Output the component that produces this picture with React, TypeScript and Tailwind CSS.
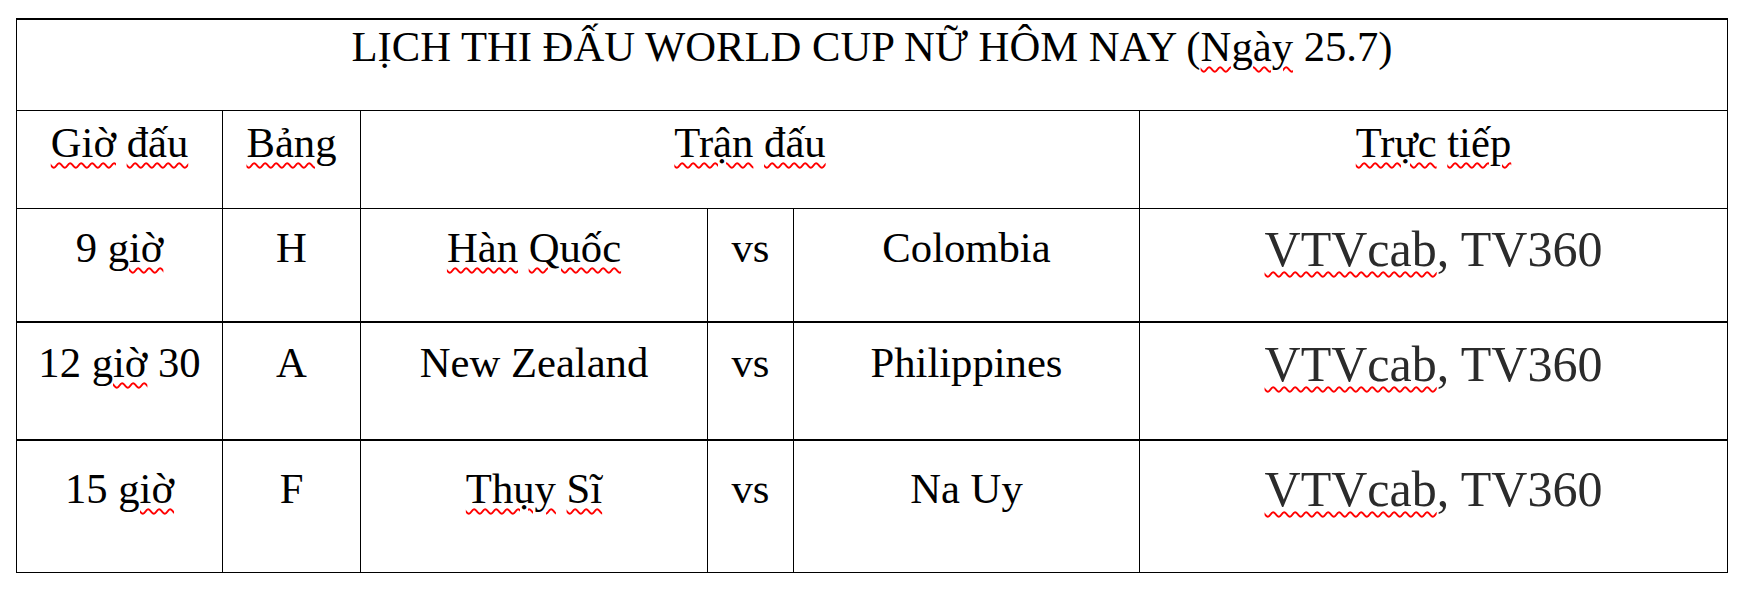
import React from "react";

function Sq({ children }: { children: React.ReactNode }) {
  return (
    <span className="underline decoration-wavy decoration-[#ff0000] decoration-[1.5px] underline-offset-[5px]">
      {children}
    </span>
  );
}

type RowProps = {
  h: string;
  border: string;
  pt: string;
  ptBig: string;
  time: React.ReactNode;
  group: string;
  home: React.ReactNode;
  away: React.ReactNode;
};

function Row({ h, border, pt, ptBig, time, group, home, away }: RowProps) {
  return (
    <div className={`flex ${h} ${border} border-black text-center text-[42.67px] leading-none`}>
      <div className={`w-[206px] shrink-0 border-r border-black ${pt}`}>{time}</div>
      <div className={`w-[138px] shrink-0 border-r border-black ${pt}`}>{group}</div>
      <div className={`w-[347px] shrink-0 border-r border-black ${pt}`}>{home}</div>
      <div className={`w-[86px] shrink-0 border-r border-black ${pt}`}>vs</div>
      <div className={`w-[346px] shrink-0 border-r border-black ${pt}`}>{away}</div>
      <div className={`flex-1 ${ptBig} text-[50px] text-[#2b2b2b]`}>
        <Sq>VTVcab</Sq>, TV360
      </div>
    </div>
  );
}

export default function App() {
  return (
    <div className="min-h-[590px] bg-white pt-[18px] pl-[16px] font-['Liberation_Serif',serif] text-black">
      <div className="w-[1712px] border-x border-t-2 border-black">
        <div className="h-[91px] border-b border-black pt-[6px] text-center text-[42.67px] leading-none">
          LỊCH THI ĐẤU WORLD CUP NỮ HÔM NAY (<Sq>Ngày</Sq> 25.7)
        </div>
        <div className="flex h-[98px] border-b border-black text-center text-[42.67px] leading-none">
          <div className="w-[206px] shrink-0 border-r border-black pt-[11px]">
            <Sq>Giờ</Sq> <Sq>đấu</Sq>
          </div>
          <div className="w-[138px] shrink-0 border-r border-black pt-[11px]">
            <Sq>Bảng</Sq>
          </div>
          <div className="w-[779px] shrink-0 border-r border-black pt-[11px]">
            <Sq>Trận</Sq> <Sq>đấu</Sq>
          </div>
          <div className="flex-1 pt-[11px]">
            <Sq>Trực</Sq> <Sq>tiếp</Sq>
          </div>
        </div>
        <Row
          h="h-[114px]"
          border="border-b-2"
          pt="pt-[18px]"
          ptBig="pt-[15px]"
          time={<>9 <Sq>giờ</Sq></>}
          group="H"
          home={<><Sq>Hàn</Sq> <Sq>Quốc</Sq></>}
          away="Colombia"
        />
        <Row
          h="h-[118px]"
          border="border-b-2"
          pt="pt-[19px]"
          ptBig="pt-[16px]"
          time={<>12 <Sq>giờ</Sq> 30</>}
          group="A"
          home="New Zealand"
          away="Philippines"
        />
        <Row
          h="h-[132px]"
          border="border-b"
          pt="pt-[27px]"
          ptBig="pt-[23px]"
          time={<>15 <Sq>giờ</Sq></>}
          group="F"
          home={<><Sq>Thụy</Sq> <Sq>Sĩ</Sq></>}
          away="Na Uy"
        />
      </div>
    </div>
  );
}
